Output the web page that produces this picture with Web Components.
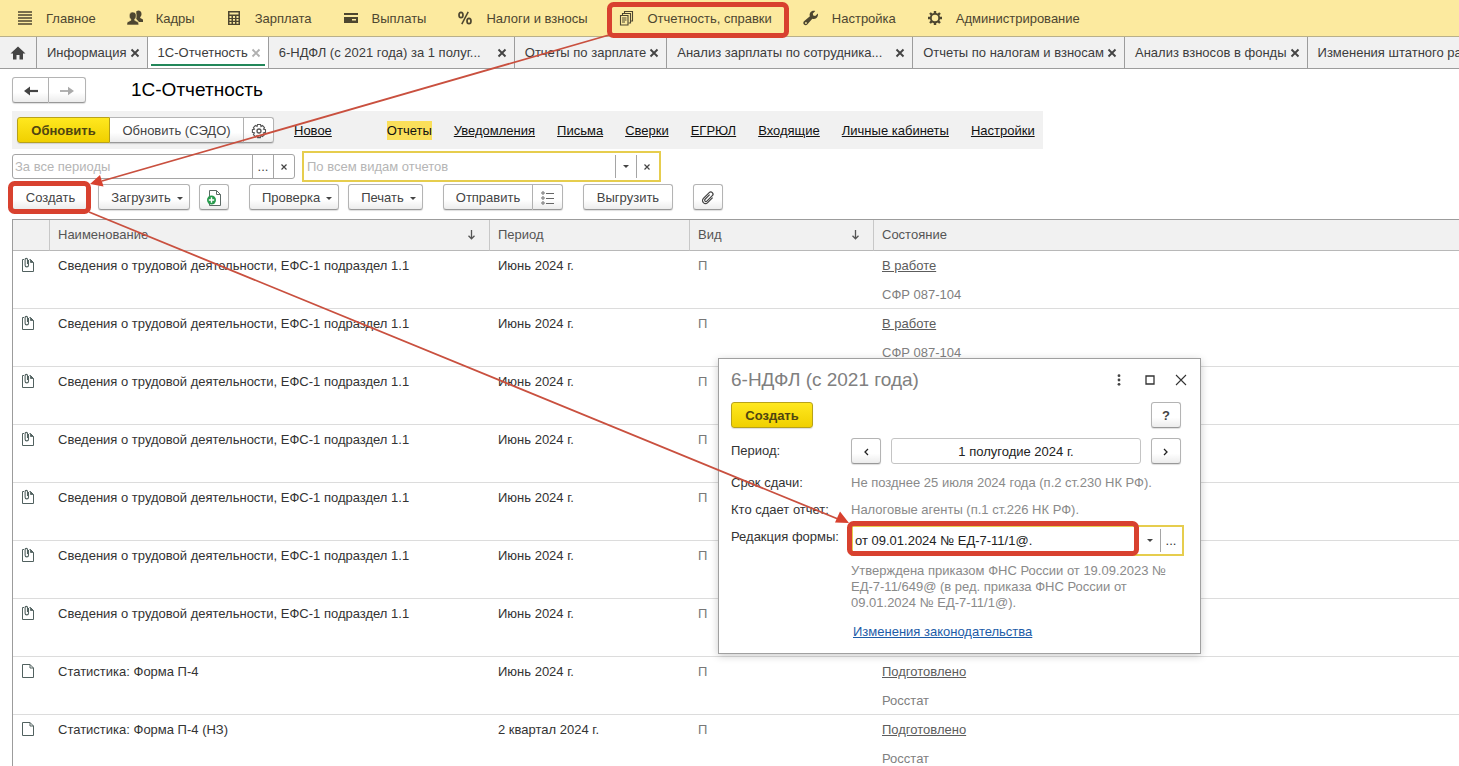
<!DOCTYPE html>
<html lang="ru">
<head>
<meta charset="utf-8">
<title>1С-Отчетность</title>
<style>
  html, body { margin: 0; height: 100%; overflow: hidden; }
  body { font: 13px/16px "Liberation Sans", Arial, sans-serif; color: #333; background: #fff; }
</style>
</head>
<body>
<report-app></report-app>
<script>
const ICONS = {
  menu: [16, 16, '<path d="M1 2h14M1 5h14M1 8h14M1 11h14M1 14h14" stroke="currentColor" stroke-width="1.6"/>'],
  people: [16, 16, '<g fill="currentColor"><path d="M11.200.500c2.200 0 3.300 1.400 3.300 3.400 0 1.400-.5 2.400-1.300 3.100v1l2.400 1.200c.5.500.6 1.800.6 2.800H12L9.300 9V1.200z"/><path d="M5.700 2c2.300 0 3.500 1.600 3.500 3.900 0 1.500-.6 2.700-1.500 3.400v1l3 1.500c.8.500 1.100 1.700 1.100 3.200H-.2c0-1.500.3-2.700 1.100-3.200l3-1.500v-1C2.900 8.600 2.300 7.400 2.300 5.900 2.300 3.600 3.400 2 5.700 2z" stroke="#fcea9f" stroke-width=".6"/></g>'],
  calc: [16, 16, '<path fill="currentColor" fill-rule="evenodd" d="M2 1h12v14H2zM3.500 2.500v2h9v-2zM3.500 6v2h2V6zm3.500 0v2h2V6zm3.500 0v2h2V6zM3.500 9v1.800h2V9zM7 9v1.800h2V9zm3.500 0v1.800h2V9zm-7 3v1.800h2V12zM7 12v1.800h2V12zm3.500 0v1.800h2V12z"/>'],
  card: [16, 16, '<path fill="currentColor" fill-rule="evenodd" d="M1 3h14v2H1zM1 7h14v6H1zM9 9v1.500h4V9z"/>'],
  percent: [16, 16, '<g fill="none" stroke="currentColor"><ellipse cx="4" cy="5" rx="2" ry="2.700" stroke-width="1.700"/><ellipse cx="12" cy="11" rx="2" ry="2.700" stroke-width="1.700"/><path d="M11.200 1.800l-6.400 12.400" stroke-width="1.500"/></g>'],
  docs: [16, 16, '<g fill="none" stroke="currentColor" stroke-width="1.100"><path d="M1.500 5.500h7.500v9.500H1.500z"/><path d="M3.500 5.500v-2h8v9.500h-2M5.500 3.500v-2h8v9.500h-2M3 8h4.500M3 10h4.500M3 12h3"/></g>'],
  wrench: [16, 16, '<path fill="currentColor" d="M14.900 3.600l-2.700 2.300-2-.3-.4-2 2.500-2.500C10.400.500 8.400 1 7.300 2.600c-.8 1.200-.9 2.500-.4 3.700L1.300 11c-1.200 1-1.300 2.500-.3 3.500s2.600.9 3.500-.3L9.300 8.700c1.400.5 3 .2 4.200-.8 1.300-1.100 1.800-2.800 1.400-4.300zM3.700 13.500a.9.900 0 1 1-1.300-1.200.9.900 0 0 1 1.300 1.200z"/>'],
  gear: [16, 16, '<g fill="none" stroke="currentColor"><circle cx="8" cy="8" r="4.200" stroke-width="1.900"/><path d="M8 1v2.500M8 12.500V15M1 8h2.500M12.500 8H15M3 3l1.900 1.900M11.100 11.100L13 13M3 13l1.900-1.900M11.100 4.900L13 3" stroke-width="2.400"/></g>'],
  home: [16, 16, '<path fill="currentColor" d="M8 1.500l7.500 7H13V14.500H9.500V10h-3v4.500H3v-6H.5z"/>'],
  close: [10, 10, '<path d="M1.500 1.500l7 7M8.500 1.500l-7 7" stroke="currentColor" stroke-width="1.900"/>'],
  clear: [8, 8, '<path d="M1.500 1.500l5 5M6.500 1.500l-5 5" stroke="currentColor" stroke-width="1.200"/>'],
  left: [16, 16, '<path d="M15 8H4" stroke="currentColor" stroke-width="2.200"/><path fill="currentColor" d="M1 8l6-4.500v9z"/>'],
  right: [16, 16, '<path d="M1 8h11" stroke="currentColor" stroke-width="1.800"/><path fill="currentColor" d="M15 8L9 3.700v8.600z"/>'],
  cog: [16, 16, '<g fill="none" stroke="#555"><path d="M6.500 1.500h3l.5 2 1.500-1 2 2-1 1.600 2 .5v2.800l-2 .5 1 1.700-2 2-1.600-1-.5 2h-2.800l-.5-2-1.700 1-2-2 1-1.700-2-.5V6.600l2-.5-1-1.600 2-2 1.700 1z" stroke-width="1.100"/><circle cx="8" cy="8" r="2" stroke-width="1.300"/></g>'],
  caretSmall: [6, 3, '<path d="M0 0h6L3 3z" fill="currentColor"/>'],
  newdoc: [18, 18, '<path d="M4.500 1.500h7l4 4v11h-11zM11.500 1.500v4h4" fill="#fff" stroke="#5c6a66"/><circle cx="6.500" cy="11" r="4.500" fill="#279a4c"/><path d="M3.800 11h5.400M6.500 8.300v5.400" stroke="#fff" stroke-width="1.400"/>'],
  list: [14, 14, '<g fill="none" stroke="#666"><circle cx="2" cy="2" r="1.200"/><circle cx="2" cy="7" r="1.200"/><circle cx="2" cy="12" r="1.200"/><path d="M5 2.500h8M5 7.500h8M5 12.500h8"/></g>'],
  clip: [16, 16, '<path transform="rotate(45 8 8)" d="M11 4.500v7a3 3 0 0 1-6 0V3.300a2.200 2.200 0 0 1 4.400 0v7.700a1.300 1.300 0 0 1-2.600 0V4.500" fill="none" stroke="currentColor" stroke-width="1.200"/>'],
  docclip: [14, 16, '<g fill="none" stroke="#51615f"><path d="M3 2.500H1.500v12h11V5.500l-3-3h-1"/><path d="M9.500 2.500v3h3" fill="#51615f" stroke-width=".8"/><path d="M7.500 3v5.200a1.700 1.700 0 0 1-3.400 0V2.600a1.200 1.200 0 0 1 2.400 0V7" stroke-width="1.100"/></g>'],
  doc: [14, 16, '<path d="M1.500 1.500h7.500l3.500 3.500v9.500h-11zM9 1.500V5h3.500" fill="none" stroke="#51615f"/>'],
  down: [9, 10, '<path d="M4.500 0v8.500M1.500 5.800l3 3 3-3" fill="none" stroke="currentColor" stroke-width="1.300"/>'],
  dots: [4, 12, '<g fill="#444"><circle cx="2" cy="1.700" r="1.400"/><circle cx="2" cy="6" r="1.400"/><circle cx="2" cy="10.300" r="1.400"/></g>'],
  maximize: [10, 10, '<path d="M1 1h8v8H1z" fill="none" stroke="#333" stroke-width="1.300"/>'],
  x: [12, 12, '<path d="M1 1l10 10M11 1L1 11" stroke="#333" stroke-width="1.100"/>'],
  prev: [6, 8, '<path d="M5 1L2 4l3 3" fill="none" stroke="#222" stroke-width="1.300"/>'],
  next: [6, 8, '<path d="M1 1l3 3-3 3" fill="none" stroke="#222" stroke-width="1.300"/>']
};

function define(name, html, setup) {
  const template = document.createElement('template');
  template.innerHTML = html;
  customElements.define(name, class extends HTMLElement {
    constructor() {
      super();
      this.attachShadow({ mode: 'open' }).append(template.content.cloneNode(true));
    }
    connectedCallback() {
      if (setup && !this.ready) { this.ready = true; setup(this, this.shadowRoot); }
    }
  });
}

define('ui-icon', '<style>:host{display:inline-flex;flex:none}svg{display:block}</style>', (el, root) => {
  const [w, h, body] = ICONS[el.getAttribute('name')];
  root.innerHTML += `<svg width="${w}" height="${h}" viewBox="0 0 ${w} ${h}" aria-hidden="true">${body}</svg>`;
});

define('menu-item', `
<style>
  :host { display: flex; }
  a { display: flex; align-items: center; gap: 13px; color: #4d4630; text-decoration: none; white-space: nowrap; }
  span { padding-top: 2px; }
</style>
<a href="#"><span><slot></slot></span></a>`, (el, root) => {
  const icon = document.createElement('ui-icon');
  icon.setAttribute('name', el.getAttribute('icon'));
  root.querySelector('a').prepend(icon);
});

define('menu-bar', `
<style>
  :host { display: block; background: #fcea9f; border-bottom: 1px solid #b9b08a; }
  nav { display: flex; gap: 31px; height: 36px; padding-left: 17px; overflow: hidden; }
</style>
<nav aria-label="Разделы"><slot></slot></nav>`);

define('tab-item', `
<style>
  :host { display: flex; flex: none; box-sizing: border-box; padding: 0 7px 0 10px; align-items: center; justify-content: space-between; gap: 3px; border-right: 1px solid #9c9c9c; white-space: nowrap; }
  :host([wide]) { width: 246px; }
  :host([active]) { background: linear-gradient(#22875a, #22875a) center 27px / calc(100% - 6px) 2px no-repeat #fff; }
  a { color: #3c3c3c; text-decoration: none; }
  button { display: flex; margin: 0; padding: 0; border: 0; background: none; color: #444; }
  :host([active]) button { color: #b0b0b0; }
</style>
<a href="#"><slot></slot></a><button aria-label="Закрыть вкладку"><ui-icon name="close"></ui-icon></button>`);

define('tab-bar', `
<style>
  :host { display: flex; height: 31px; background: #f1f1f1; border-bottom: 1px solid #9c9c9c; overflow: hidden; }
  a { display: flex; align-items: center; justify-content: center; flex: none; width: 36px; border-right: 1px solid #9c9c9c; color: #444; }
</style>
<a href="#" aria-label="Начальная страница"><ui-icon name="home"></ui-icon></a><slot></slot>`);

define('push-button', `
<style>
  :host { display: block; flex: none; box-sizing: border-box; height: 26px; }
  button { display: flex; align-items: center; justify-content: center; gap: 6px; box-sizing: border-box; width: 100%; height: 100%; margin: 0; padding: 2px 12px 0;
    border: 1px solid #b4b4b4; border-bottom-color: #989898; border-radius: 3px; background: linear-gradient(#fff 60%, #ececec); box-shadow: 0 1px 1px #0002;
    font: inherit; color: #444; white-space: nowrap; }
  :host([square]) { width: 30px; }
  :host([square]) button { padding: 1px 0 0; }
  :host([primary]) button { background: linear-gradient(#ffe81f, #f0d000); border-color: #b8a21a; font-weight: bold; color: #4f4510; }
  :host([joined~="right"]) button { border-top-right-radius: 0; border-bottom-right-radius: 0; }
  :host([joined~="left"]) button { border-top-left-radius: 0; border-bottom-left-radius: 0; border-left: 0; }
  :host([disabled]) button { color: #aaa; }
  :host([dropdown]) button { padding: 2px 6px 0 12px; }
  ui-icon { display: none; }
  :host([dropdown]) ui-icon { display: inline-flex; }
</style>
<button><slot></slot><ui-icon name="caretSmall"></ui-icon></button>`, (el, root) => {
  if (el.hasAttribute('label')) root.querySelector('button').setAttribute('aria-label', el.getAttribute('label'));
});

define('page-head', `
<style>
  :host { display: flex; align-items: center; gap: 45px; padding: 8px 12px 0; }
  div { display: flex; }
  push-button { width: 37px; }
  h1 { margin: 0; font-size: 19px; line-height: 24px; font-weight: normal; color: #000; }
</style>
<div><push-button square joined="right" label="Назад"><ui-icon name="left"></ui-icon></push-button><push-button square joined="left" disabled label="Вперед"><ui-icon name="right"></ui-icon></push-button></div>
<h1><slot></slot></h1>`);

define('section-links', `
<style>
  :host { display: flex; align-items: center; box-sizing: border-box; width: fit-content; margin: 8px 12px 0; padding: 6px 8px 6px 5px; background: #f1f1f1; }
  .update { display: flex; margin-right: 20px; }
  .update push-button:first-child { width: 93px; }
  .update push-button:nth-child(2) { width: 134px; }
  nav { display: flex; gap: 22px; white-space: nowrap; }
  a { color: #111; padding: 2px 0 1px; }
  a:first-child { margin-right: 33px; }
  a[aria-current] { background: #fadf5a; text-decoration: none; }
</style>
<div class="update"><push-button primary joined="right">Обновить</push-button><push-button joined="left right">Обновить (СЭДО)</push-button><push-button square joined="left" label="Настройки обмена"><ui-icon name="cog"></ui-icon></push-button></div>
<nav aria-label="Виды отправок">
  <a href="#">Новое</a><a href="#" aria-current="page">Отчеты</a><a href="#">Уведомления</a><a href="#">Письма</a><a href="#">Сверки</a><a href="#">ЕГРЮЛ</a><a href="#">Входящие</a><a href="#">Личные кабинеты</a><a href="#">Настройки</a>
</nav>`);

define('filter-row', `
<style>
  :host { display: flex; align-items: center; gap: 7px; padding: 2px 12px 0; }
  .field { display: flex; box-sizing: border-box; height: 25px; border: 1px solid #a5a5a5; border-radius: 3px; width: 283px; background: #fff; }
  .field.kind { height: 31px; width: 359px; padding: 2px 2px 2px 1px; border: 2px solid #e6cd4e; border-radius: 0; }
  input, select { appearance: none; flex: 1; min-width: 0; margin: 0; padding: 0 2px; border: 0; outline: 0; background: none; font: inherit; color: #b5b5b5; }
  input::placeholder { color: #b5b5b5; opacity: 1; }
  .combo { display: grid; flex: 1; grid-template-columns: 1fr 21px; }
  .combo select { grid-area: 1 / 1 / 2 / 3; }
  .combo span { grid-area: 1 / 2; pointer-events: none; }
  button, .combo span { display: flex; align-items: center; justify-content: center; box-sizing: border-box; width: 21px; margin: 0; padding: 0; border: 0; border-left: 1px solid #a5a5a5; background: none; font: inherit; color: #444; }
</style>
<div class="field"><input aria-label="Период" placeholder="За все периоды"><button aria-label="Выбрать период">...</button><button aria-label="Очистить период"><ui-icon name="clear"></ui-icon></button></div>
<div class="field kind"><div class="combo"><select aria-label="Вид отчета"><option>По всем видам отчетов</option></select><span><ui-icon name="caretSmall"></ui-icon></span></div><button aria-label="Очистить вид"><ui-icon name="clear"></ui-icon></button></div>`);

define('command-bar', `
<style>
  :host { display: flex; gap: 20px; padding: 2px 12px 9px; }
  div { display: flex; gap: 9px; }
  .joined { gap: 0; }
  .s { width: 77px; } .m { width: 90px; } .l { width: 92px; } .p { width: 75px; }
</style>
<div><push-button class="s">Создать</push-button><push-button class="l" dropdown>Загрузить</push-button><push-button square label="Создать по шаблону"><ui-icon name="newdoc"></ui-icon></push-button></div>
<div><push-button class="m" dropdown>Проверка</push-button><push-button class="p" dropdown>Печать</push-button></div>
<div class="joined"><push-button class="m" joined="right">Отправить</push-button><push-button square joined="left" label="Список отправок"><ui-icon name="list"></ui-icon></push-button></div>
<div><push-button class="m">Выгрузить</push-button></div>
<div><push-button square label="Вложения"><ui-icon name="clip"></ui-icon></push-button></div>`);

define('report-table', `
<style>
  :host { display: block; margin-left: 12px; border: 1px solid #9c9c9c; border-width: 1px 0 0 1px; }
  table { width: 100%; table-layout: fixed; border-collapse: separate; border-spacing: 0; }
  .i { width: 37px; } .n { width: 440px; } .p { width: 200px; } .k { width: 184px; }
  th, td { box-sizing: border-box; padding: 0 8px; text-align: left; font-weight: normal; }
  th { height: 31px; background: #f1f1f1; border-bottom: 1px solid #b8b8b8; border-right: 1px solid #c8c8c8; color: #555; }
  th:last-child { border-right: 0; }
  th div { display: flex; align-items: center; justify-content: space-between; padding-right: 5px; }
  td { height: 58px; padding-top: 7px; border-bottom: 1px solid #dcdcdc; vertical-align: top; }
  td:first-child { padding: 6px 8px 0; }
  .kind { color: #777; }
  .state { display: flex; flex-direction: column; align-items: flex-start; gap: 13px; color: #808080; }
  a { color: #5c5c5c; }
</style>
<table>
  <colgroup><col class="i"><col class="n"><col class="p"><col class="k"><col></colgroup>
  <thead><tr><th aria-label="Вложение"></th><th><div>Наименование<ui-icon name="down"></ui-icon></div></th><th>Период</th><th><div>Вид<ui-icon name="down"></ui-icon></div></th><th>Состояние</th></tr></thead>
  <tbody></tbody>
</table>`, (el, root) => {
  const labor = ['docclip', 'Сведения о трудовой деятельности, ЕФС-1 подраздел 1.1', 'Июнь 2024 г.'];
  const rows = [
    [...labor, 'В работе', 'СФР 087-104'],
    [...labor, 'В работе', 'СФР 087-104'],
    labor, labor, labor, labor, labor,
    ['doc', 'Статистика: Форма П-4', 'Июнь 2024 г.', 'Подготовлено', 'Росстат'],
    ['doc', 'Статистика: Форма П-4 (НЗ)', '2 квартал 2024 г.', 'Подготовлено', 'Росстат']
  ];
  root.querySelector('tbody').innerHTML = rows.map(([icon, name, period, state, to]) =>
    `<tr><td><ui-icon name="${icon}"></ui-icon></td><td>${name}</td><td>${period}</td><td class="kind">П</td><td>${
      state ? `<div class="state"><a href="#">${state}</a><span>${to}</span></div>` : ''}</td></tr>`).join('');
});

define('form-dialog', `
<style>
  :host { display: block; position: absolute; left: 718px; top: 358px; box-sizing: border-box; width: 483px; padding: 9px 16px 13px 12px; background: #fff; border: 1px solid #a0a0a0; box-shadow: 0 2px 8px #0003; }
  header, .bar { display: flex; align-items: center; justify-content: space-between; }
  h2 { margin: 0; font-size: 19px; line-height: 24px; font-weight: normal; color: #808080; }
  .tools { display: flex; align-items: center; gap: 15px; margin-right: -5px; }
  .tools button { display: flex; justify-content: center; width: 16px; margin: 0; padding: 0; border: 0; background: none; }
  .bar { padding: 10px 3px 10px 0; }
  .bar push-button:first-child { width: 82px; }
  .grid { display: grid; grid-template-columns: 120px 1fr; row-gap: 11px; align-items: center; }
  label[for="edition"] { align-self: start; }
  .period { display: flex; gap: 10px; padding-right: 3px; }
  .period input { flex: 1; min-width: 0; box-sizing: border-box; height: 26px; margin: 0; padding: 0 10px; border: 1px solid #c4c4c4; border-radius: 3px; background: #fff; font: inherit; color: #222; text-align: center; }
  .muted { color: #8a8a8a; }
  .edition { display: flex; box-sizing: border-box; height: 31px; padding: 2px 1px; margin: -4px 0 -8px; border: 2px solid #e6cd4e; }
  .combo { display: grid; flex: 1; grid-template-columns: 1fr 21px; }
  .combo select { grid-area: 1 / 1 / 2 / 3; appearance: none; min-width: 0; margin: 0; padding: 0 1px; border: 0; outline: 0; background: none; font: inherit; color: #222; }
  .combo span { grid-area: 1 / 2; display: flex; align-items: center; justify-content: center; pointer-events: none; color: #444; }
  .edition button { width: 21px; margin: 0; padding: 0; border: 0; border-left: 1px solid #a5a5a5; background: none; font: inherit; color: #333; }
  .note { grid-column: 2; width: 320px; padding-top: 4px; }
  .note p { margin: 0; }
  .note a { display: block; width: fit-content; margin: 13px 2px 0; color: #1c5ca8; }
</style>
<header><h2>6-НДФЛ (с 2021 года)</h2><div class="tools"><button aria-label="Меню"><ui-icon name="dots"></ui-icon></button><button aria-label="Развернуть"><ui-icon name="maximize"></ui-icon></button><button aria-label="Закрыть"><ui-icon name="x"></ui-icon></button></div></header>
<div class="bar"><push-button primary>Создать</push-button><push-button square><b>?</b></push-button></div>
<div class="grid">
  <label for="period">Период:</label>
  <div class="period"><push-button square label="Предыдущий период"><ui-icon name="prev"></ui-icon></push-button><input id="period" value="1 полугодие 2024 г."><push-button square label="Следующий период"><ui-icon name="next"></ui-icon></push-button></div>
  <div>Срок сдачи:</div><div class="muted">Не позднее 25 июля 2024 года (п.2 ст.230 НК РФ).</div>
  <div>Кто сдает отчет:</div><div class="muted">Налоговые агенты (п.1 ст.226 НК РФ).</div>
  <label for="edition">Редакция формы:</label>
  <div class="edition"><div class="combo"><select id="edition"><option>от 09.01.2024 № ЕД-7-11/1@.</option></select><span><ui-icon name="caretSmall"></ui-icon></span></div><button aria-label="Выбрать редакцию">...</button></div>
  <div class="note muted"><p>Утверждена приказом ФНС России от 19.09.2023 № ЕД-7-11/649@ (в ред. приказа ФНС России от 09.01.2024 № ЕД-7-11/1@).</p><a href="#">Изменения законодательства</a></div>
</div>`);

define('step-marks', `
<style>
  :host { display: block; position: absolute; inset: 0; overflow: hidden; pointer-events: none; }
  svg { display: block; }
</style>
<svg width="1459" height="766" viewBox="0 0 1459 766" aria-hidden="true">
  <g fill="none" stroke="#d8412f">
    <path d="M609 35L102 181M89 212L838 519" stroke="#c9503f" stroke-width="1.800"/>
    <g stroke-width="5"><rect x="609.500" y="4.500" width="177" height="31" rx="4"/><rect x="10.500" y="183.500" width="78" height="28" rx="4"/><rect x="849.500" y="523.500" width="287" height="30" rx="4"/></g>
  </g>
  <path fill="#d8412f" d="M90 184l10-9 3.500 11.500zM849 523l-14-.5 5-11z"/>
</svg>`);

define('report-app', `
<style>
  :host { display: block; position: relative; height: 100vh; overflow: hidden; }
</style>
<menu-bar>
  <menu-item icon="menu">Главное</menu-item><menu-item icon="people">Кадры</menu-item><menu-item icon="calc">Зарплата</menu-item><menu-item icon="card">Выплаты</menu-item><menu-item icon="percent">Налоги и взносы</menu-item><menu-item icon="docs">Отчетность, справки</menu-item><menu-item icon="wrench">Настройка</menu-item><menu-item icon="gear">Администрирование</menu-item>
</menu-bar>
<tab-bar>
  <tab-item>Информация</tab-item><tab-item active>1С-Отчетность</tab-item><tab-item wide>6-НДФЛ (с 2021 года) за 1 полуг...</tab-item><tab-item>Отчеты по зарплате</tab-item><tab-item wide>Анализ зарплаты по сотрудника...</tab-item><tab-item>Отчеты по налогам и взносам</tab-item><tab-item>Анализ взносов в фонды</tab-item><tab-item>Изменения штатного расписания</tab-item>
</tab-bar>
<main>
  <page-head>1С-Отчетность</page-head>
  <section-links></section-links>
  <filter-row></filter-row>
  <command-bar></command-bar>
  <report-table></report-table>
</main>
<form-dialog role="dialog" aria-label="6-НДФЛ (с 2021 года)"></form-dialog>
<step-marks></step-marks>`);
</script>
</body>
</html>
